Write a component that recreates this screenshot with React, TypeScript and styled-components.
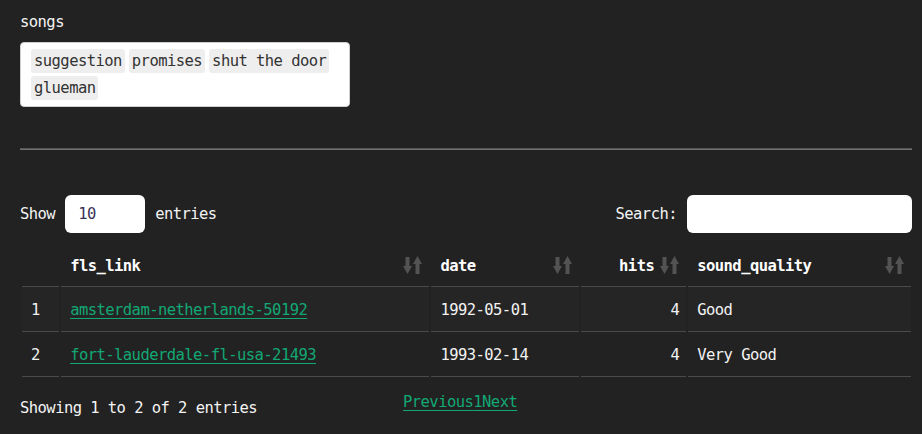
import React from "react";
import styled, { createGlobalStyle } from "styled-components";

const Global = createGlobalStyle`
  html, body { margin: 0; padding: 0; background: #222222; }
  body {
    font-family: "DejaVu Sans Mono", "Liberation Mono", monospace;
    font-size: 15.5px;
    letter-spacing: -0.55px;
    line-height: 20px;
    color: #f0f0f0;
  }
`;

const Page = styled.div`
  padding: 12px 10px 0 20px;
`;

const FieldLabel = styled.div`
  margin-bottom: 10px;
  color: #f4f4f4;
`;

const TagBox = styled.div`
  width: 308px;
  background: #ffffff;
  border: 1px solid #cfcfcf;
  border-radius: 4px;
  padding: 6px 10px;
  display: flex;
  flex-wrap: wrap;
  column-gap: 4px;
  row-gap: 3px;
`;

const Tag = styled.span`
  display: inline-block;
  height: 24px;
  line-height: 24px;
  padding: 0 3px;
  background: #eeeeee;
  color: #333333;
  border-radius: 3px;
`;

const Rule = styled.hr`
  margin: 41px 0 0 0;
  height: 0;
  border: 0;
  border-top: 1px solid #555555;
  border-bottom: 1px solid #707070;
`;

const Controls = styled.div`
  margin-top: 45px;
  display: flex;
  justify-content: space-between;
  align-items: center;
`;

const ControlGroup = styled.label`
  display: flex;
  align-items: center;
  gap: 10px;
  color: #f4f4f4;
`;

const Field = styled.div<{ $w: number }>`
  width: ${(p) => p.$w}px;
  height: 38px;
  box-sizing: border-box;
  background: #ffffff;
  border-radius: 6px;
  padding: 0 13px;
  display: flex;
  align-items: center;
  color: #3a3358;
`;

const Table = styled.table`
  margin-top: 11px;
  width: calc(100% + 1px);
  border-collapse: separate;
  border-spacing: 2px 0;
`;

const Th = styled.th<{ $w: number }>`
  width: ${(p) => p.$w}px;
  height: 43px;
  padding: 1px 7px 0 9px;
  box-sizing: border-box;
  border-bottom: 1px solid #4a4a4a;
  font-weight: bold;
  color: #ffffff;
  text-align: left;
`;

const HeadInner = styled.div<{ $right?: boolean }>`
  display: flex;
  align-items: center;
  gap: 6px;
  & > span {
    flex: 1;
    text-align: ${(p) => (p.$right ? "right" : "left")};
  }
`;

const Tr = styled.tr<{ $odd?: boolean }>`
  & > td {
    background: ${(p) => (p.$odd ? "#252525" : "transparent")};
  }
`;

const Td = styled.td<{ $right?: boolean }>`
  height: 45px;
  padding: 2px 7px 0 9px;
  box-sizing: border-box;
  border-bottom: 1px solid #4a4a4a;
  text-align: ${(p) => (p.$right ? "right" : "left")};
  color: #f2f2f2;
`;

const Link = styled.a`
  color: #12a874;
  text-decoration: underline;
  text-underline-offset: 3px;
  cursor: pointer;
`;

const Footer = styled.div`
  display: flex;
  align-items: flex-start;
`;

const Info = styled.div`
  width: 383px;
  margin-top: 21px;
  color: #f4f4f4;
`;

const Paging = styled.div`
  margin-top: 15px;
  display: flex;
`;

const SortIcon = () => (
  <svg width="19" height="19" viewBox="0 0 19 19" style={{ flex: "none" }}>
    <g fill="#535353">
      <rect x="2.5" y="1" width="4" height="11" />
      <polygon points="0,10 9,10 4.5,18" />
      <rect x="12.5" y="7" width="4" height="11" />
      <polygon points="10,8 19,8 14.5,0" />
    </g>
  </svg>
);

const rows = [
  { n: 1, link: "amsterdam-netherlands-50192", date: "1992-05-01", hits: 4, q: "Good" },
  { n: 2, link: "fort-lauderdale-fl-usa-21493", date: "1993-02-14", hits: 4, q: "Very Good" },
];

export default function App() {
  return (
    <>
      <Global />
      <Page>
        <FieldLabel>songs</FieldLabel>
        <TagBox>
          {["suggestion", "promises", "shut the door", "glueman"].map((t) => (
            <Tag key={t}>{t}</Tag>
          ))}
        </TagBox>
        <Rule />
        <Controls>
          <ControlGroup>
            Show <Field $w={80}>10</Field> entries
          </ControlGroup>
          <ControlGroup>
            Search: <Field $w={225} />
          </ControlGroup>
        </Controls>
        <Table>
          <thead>
            <tr>
              <Th $w={37}></Th>
              <Th $w={367}>
                <HeadInner>
                  <span>fls_link</span>
                  <SortIcon />
                </HeadInner>
              </Th>
              <Th $w={147}>
                <HeadInner>
                  <span>date</span>
                  <SortIcon />
                </HeadInner>
              </Th>
              <Th $w={105}>
                <HeadInner $right>
                  <span>hits</span>
                  <SortIcon />
                </HeadInner>
              </Th>
              <Th $w={222}>
                <HeadInner>
                  <span>sound_quality</span>
                  <SortIcon />
                </HeadInner>
              </Th>
            </tr>
          </thead>
          <tbody>
            {rows.map((r) => (
              <Tr key={r.n} $odd={r.n % 2 === 1}>
                <Td>{r.n}</Td>
                <Td>
                  <Link>{r.link}</Link>
                </Td>
                <Td>{r.date}</Td>
                <Td $right>{r.hits}</Td>
                <Td>{r.q}</Td>
              </Tr>
            ))}
          </tbody>
        </Table>
        <Footer>
          <Info>Showing 1 to 2 of 2 entries</Info>
          <Paging>
            <Link>Previous</Link>
            <Link>1</Link>
            <Link>Next</Link>
          </Paging>
        </Footer>
      </Page>
    </>
  );
}
